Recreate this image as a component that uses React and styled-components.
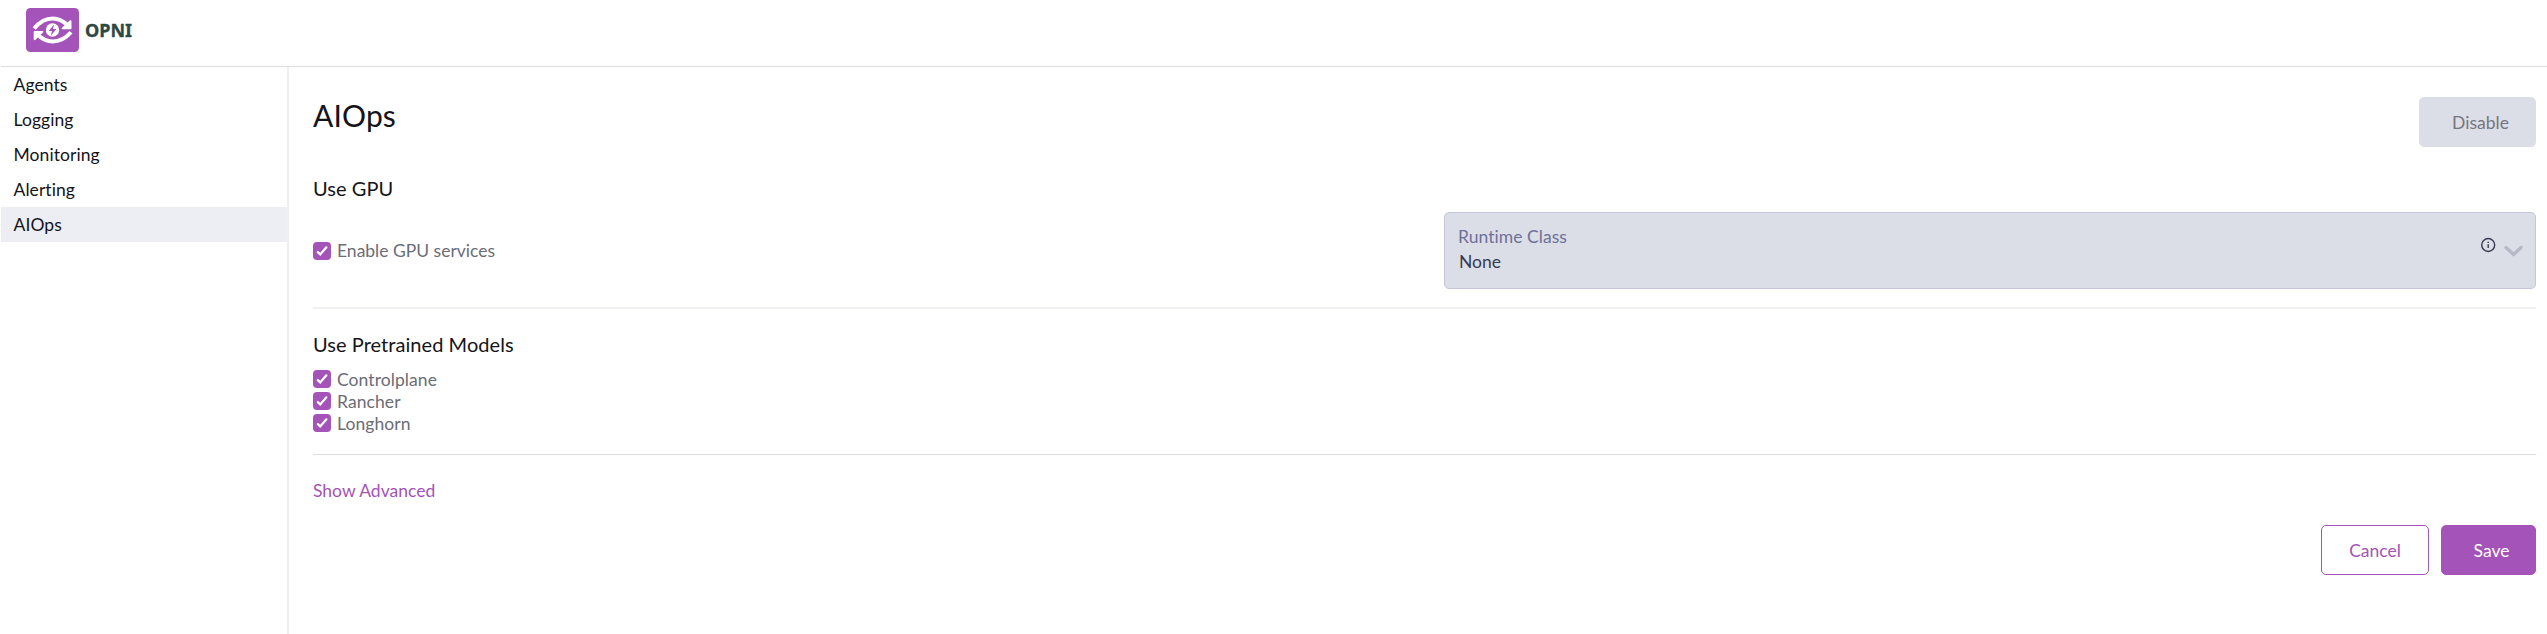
import React from 'react';
import styled, { createGlobalStyle } from 'styled-components';

const purple = '#a453b9';

const GlobalStyle = createGlobalStyle`
  * { box-sizing: border-box; }
  body {
    margin: 0;
    background: #fff;
    color: #141419;
    font: 17.5px/21px Lato, "Open Sans", sans-serif;
    font-variant-ligatures: none;
  }
`;

const Page = styled.div`
  display: flex;
  flex-direction: column;
  height: 634px;
  padding-left: 1px;
  overflow: hidden;
`;

const Header = styled.header`
  display: flex;
  flex: none;
  height: 67px;
  padding: 8px 0 0 25px;
  border-bottom: 1px solid #dcdee7;
`;

const Logo = styled.svg`
  width: 53px;
  height: 44px;
`;

const Brand = styled.span`
  margin: 11px 0 0 6px;
  color: #2f4843;
  font: 700 18px/22px "Noto Sans", "Open Sans", sans-serif;
  -webkit-text-stroke: 0.3px #2f4843;
`;

const Body = styled.div`
  display: flex;
  flex: 1;
`;

const Sidebar = styled.nav`
  flex: none;
  width: 288px;
  border-right: 2px solid #efeff4;
`;

const NavItem = styled.a`
  display: block;
  height: 35px;
  padding: 7px 0 0 12.5px;
  letter-spacing: 0.08px;
  background: ${(p) => (p.$active ? '#edeef3' : 'transparent')};
`;

const Main = styled.main`
  flex: 1;
  padding: 30px 11px 0 24px;
`;

const TitleRow = styled.div`
  display: flex;
  justify-content: space-between;
  height: 79px;
`;

const Title = styled.h1`
  margin: 0;
  font-size: 30px;
  line-height: 36px;
  font-weight: 400;
  letter-spacing: 0.15px;
`;

const Subtitle = styled.h3`
  margin: 0;
  font-size: 20px;
  line-height: 24px;
  font-weight: 400;
  letter-spacing: 0.05px;
`;

const Button = styled.button`
  width: ${(p) => p.$width}px;
  height: 50px;
  padding: 0 0 0 ${(p) => p.$indent || 0}px;
  border: 1px solid ${(p) => p.$border};
  border-radius: 5px;
  background: ${(p) => p.$bg};
  color: ${(p) => p.$color};
  font: inherit;
`;

const GpuRow = styled.div`
  display: flex;
  align-items: center;
  justify-content: space-between;
  height: 77px;
  margin-top: 12px;
`;

const CheckLabel = styled.label`
  display: flex;
  align-items: center;
  gap: 6px;
  height: 22px;
  color: #6c6c76;
`;

const Box = styled.svg`
  width: 18px;
  height: 18px;
`;

const CheckList = styled.div`
  margin-top: 12px;
  letter-spacing: 0.08px;
`;

const Divider = styled.hr`
  height: ${(p) => p.$size}px;
  margin: ${(p) => p.$top}px 0 ${(p) => p.$bottom}px;
  border: 0;
  background: ${(p) => p.$color};
`;

const Select = styled.div`
  display: flex;
  justify-content: space-between;
  width: 1092px;
  height: 77px;
  padding: 13px 12px 0 13px;
  border: 1px solid #c5c6d9;
  border-radius: 5px;
  background: #dcdee7;
`;

const SelectLabel = styled.div`
  height: 25px;
  color: #6c7198;
  line-height: 22px;
  letter-spacing: 0.05px;
`;

const SelectValue = styled.div`
  padding-left: 1px;
  color: #363a52;
  line-height: 21px;
`;

const SelectIcons = styled.div`
  display: flex;
  align-items: flex-start;
  gap: 7px;
  padding-top: 11px;
`;

const InfoIcon = styled.svg`
  width: 16px;
  height: 16px;
`;

const ChevronIcon = styled.svg`
  width: 20px;
  height: 13px;
  margin-top: 8px;
`;

const AdvancedLink = styled.a`
  display: block;
  color: ${purple};
`;

const Footer = styled.footer`
  display: flex;
  justify-content: flex-end;
  gap: 12px;
  margin-top: 24px;
`;

const Checkbox = ({ label }) => (
  <CheckLabel>
    <Box viewBox="0 0 18 18">
      <rect width="18" height="18" rx="4" fill={purple} />
      <path d="M4.8 10.1 7.2 12.4 13.4 5.3" fill="none" stroke="#fff" strokeWidth="2.2" strokeLinecap="round" />
    </Box>
    {label}
  </CheckLabel>
);

const OpniLogo = () => (
  <Logo viewBox="0 0 53 44">
    <rect width="53" height="44" rx="4.5" fill={purple} />
    <g fill="none" stroke="#fff" strokeWidth="4">
      <path d="M8.2 20.4C14 13.2 20.5 10.4 26.8 10.4C33 10.4 37 12.8 41.5 17" />
      <path d="M45 24.2C39.2 30.8 33 33.4 26.6 33.4C20.2 33.4 16.3 31 11.8 27" />
    </g>
    <path d="M44 12.3q1.5-.5 1.5 1v7q0 .9-1 .9h-8q-1.7-.3-.5-1.4z" fill="#fff" />
    <path d="M9.2 32q-1.5.5-1.5-1v-7q0-.9 1-.9h7.8q1.7.3.5 1.4z" fill="#fff" />
    <circle cx="26.5" cy="22" r="6.7" fill="#fff" />
    <path d="M28 16.4 22.7 23H26L24.9 27.8 30.4 21H27z" fill={purple} />
  </Logo>
);

const navItems = ['Agents', 'Logging', 'Monitoring', 'Alerting', 'AIOps'];
const models = ['Controlplane', 'Rancher', 'Longhorn'];

export default function App() {
  return (
    <Page>
      <GlobalStyle />
      <Header>
        <OpniLogo />
        <Brand>OPNI</Brand>
      </Header>
      <Body>
        <Sidebar>
          {navItems.map((item) => (
            <NavItem key={item} $active={item === 'AIOps'}>{item}</NavItem>
          ))}
        </Sidebar>
        <Main>
          <TitleRow>
            <Title>AIOps</Title>
            <Button $width={117} $indent={6} $bg="#dcdee7" $border="#dcdee7" $color="#74757f">Disable</Button>
          </TitleRow>
          <Subtitle>Use GPU</Subtitle>
          <GpuRow>
            <Checkbox label="Enable GPU services" />
            <Select>
              <div>
                <SelectLabel>Runtime Class</SelectLabel>
                <SelectValue>None</SelectValue>
              </div>
              <SelectIcons>
                <InfoIcon viewBox="0 0 16 16">
                  <circle cx="8.2" cy="8" r="6.5" fill="none" stroke="#363a52" strokeWidth="1.4" />
                  <path d="M8.2 7.2V11M8.2 4.8V6" stroke="#363a52" strokeWidth="1.4" />
                </InfoIcon>
                <ChevronIcon viewBox="0 0 20 13">
                  <path d="M3 2.5 10.5 9.5 18 2.5" fill="none" stroke="#b8b8c7" strokeWidth="3.4" strokeLinecap="round" />
                </ChevronIcon>
              </SelectIcons>
            </Select>
          </GpuRow>
          <Divider $size={2} $top={18} $bottom={23} $color="#efeff4" />
          <Subtitle>Use Pretrained Models</Subtitle>
          <CheckList>
            {models.map((model) => (
              <Checkbox key={model} label={model} />
            ))}
          </CheckList>
          <Divider $size={1} $top={20} $bottom={25} $color="#dcdee7" />
          <AdvancedLink>Show Advanced</AdvancedLink>
          <Footer>
            <Button $width={108} $bg="#fff" $border={purple} $color={purple}>Cancel</Button>
            <Button $width={95} $indent={6} $bg={purple} $border={purple} $color="#fff">Save</Button>
          </Footer>
        </Main>
      </Body>
    </Page>
  );
}
